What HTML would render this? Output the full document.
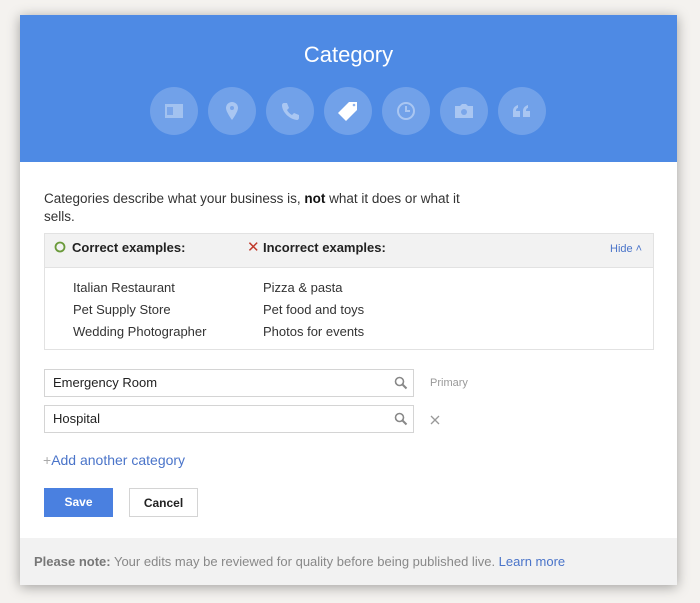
<!DOCTYPE html>
<html><head><meta charset="utf-8"><style>
body{margin:0;width:700px;height:603px;background:#f4f2ef;font-family:"Liberation Sans",sans-serif;position:relative;overflow:hidden}
.dlg{position:absolute;left:20px;top:15px;width:657px;height:570px;background:#fff;box-shadow:0 2px 12px rgba(0,0,0,.35)}
.hdr{position:absolute;left:0;top:0;width:657px;height:147px;background:#4e8ae4}
.title{position:absolute;top:27px;width:100%;text-align:center;color:#fff;font-size:22px}
.ic{position:absolute;top:72px;width:48px;height:48px;border-radius:50%;background:rgba(255,255,255,.2)}
.ic svg{position:absolute;left:12px;top:12px}
.t{position:absolute;font-size:13px;color:#333}
.box{position:absolute;left:24px;top:218px;width:608px;height:115px;border:1px solid #e2e2e2}
.bh{height:33px;background:#f2f2f2;border-bottom:1px solid #e2e2e2}
.inp{position:absolute;left:24px;width:370px;height:28px;border:1px solid #d4d4d4;font-size:13px;color:#222;line-height:26px;padding-left:8px;box-sizing:border-box}
.btn{position:absolute;top:473px;height:29px;font-size:12px;font-weight:bold;line-height:29px;text-align:center;box-sizing:border-box}
.foot{position:absolute;left:0;top:523px;width:657px;height:47px;background:#f2f2f2;font-size:13px;color:#888;line-height:47px;padding-left:14px;box-sizing:border-box}
</style></head><body>
<div class="dlg">
<div class="hdr">
<div class="title">Category</div>
<div class="ic" style="left:130px"><svg width="24" height="24"><rect x="3" y="5" width="18" height="14" fill="rgba(255,255,255,.35)"/><rect x="5" y="8" width="6" height="8" fill="#7aa6ea"/></svg></div>
<div class="ic" style="left:188px"><svg width="24" height="24"><path d="M12 3a6 6 0 0 0-6 6c0 4 6 12 6 12s6-8 6-12a6 6 0 0 0-6-6z" fill="rgba(255,255,255,.4)"/><circle cx="12" cy="9" r="2" fill="#7aa6ea"/></svg></div>
<div class="ic" style="left:246px"><svg width="24" height="24"><path d="M6 4l3 0 2 5-2 2c1 2 3 4 5 5l2-2 5 2v3c0 1-1 2-2 2C11 20 4 13 4 6c0-1 1-2 2-2z" fill="rgba(255,255,255,.4)"/></svg></div>
<div class="ic" style="left:304px"><svg width="24" height="24"><path d="M13 3h8v8L10 22 2 14z" fill="#fff"/><circle cx="18" cy="6" r="1.3" fill="#8db2ee"/></svg></div>
<div class="ic" style="left:362px"><svg width="24" height="24"><circle cx="12" cy="12" r="8" fill="none" stroke="rgba(255,255,255,.4)" stroke-width="2"/><path d="M12 7v5h4" fill="none" stroke="rgba(255,255,255,.4)" stroke-width="2"/></svg></div>
<div class="ic" style="left:420px"><svg width="24" height="24"><path d="M3 7h5l2-2h4l2 2h5v12H3z" fill="rgba(255,255,255,.4)"/><circle cx="12" cy="13" r="3" fill="#7aa6ea"/></svg></div>
<div class="ic" style="left:478px"><svg width="24" height="24"><path d="M3 18v-6c0-3 2-5 5-6v3c-1 0-2 1-2 3h4v6zM13 18v-6c0-3 2-5 5-6v3c-1 0-2 1-2 3h4v6z" fill="rgba(255,255,255,.4)"/></svg></div>
</div>
<div class="t" style="left:24px;top:175px;line-height:18px;width:430px;font-size:13.5px">Categories describe what your business is, <b style="color:#111">not</b> what it does or what it sells.</div>
<div class="box"><div class="bh"></div></div>
<svg style="position:absolute;left:34px;top:226px" width="12" height="12"><circle cx="6" cy="6" r="4.5" fill="none" stroke="#6a9a3a" stroke-width="1.8"/></svg>
<div class="t" style="left:52px;top:225px;font-weight:bold;color:#222">Correct examples:</div>
<div class="t" style="left:227px;top:223px;color:#c0392b;font-size:15px">✕</div>
<div class="t" style="left:243px;top:225px;font-weight:bold;color:#222">Incorrect examples:</div>
<div class="t" style="left:590px;top:228px;font-size:11px;color:#4a74c9">Hide ˄</div>
<div class="t" style="left:53px;top:262px;line-height:22px">Italian Restaurant<br>Pet Supply Store<br>Wedding Photographer</div>
<div class="t" style="left:243px;top:262px;line-height:22px">Pizza &amp; pasta<br>Pet food and toys<br>Photos for events</div>
<div class="inp" style="top:354px">Emergency Room</div>
<div class="inp" style="top:390px">Hospital</div>
<svg style="position:absolute;left:374px;top:361px" width="14" height="14"><circle cx="5.5" cy="5.5" r="4" fill="none" stroke="#888" stroke-width="1.6"/><path d="M8.5 8.5l4 4" stroke="#888" stroke-width="2"/></svg>
<svg style="position:absolute;left:374px;top:397px" width="14" height="14"><circle cx="5.5" cy="5.5" r="4" fill="none" stroke="#888" stroke-width="1.6"/><path d="M8.5 8.5l4 4" stroke="#888" stroke-width="2"/></svg>
<div class="t" style="left:410px;top:362px;font-size:11px;color:#999">Primary</div>
<svg style="position:absolute;left:410px;top:400px" width="10" height="10"><path d="M1 1l8 8M9 1l-8 8" stroke="#999" stroke-width="1.3"/></svg>
<div class="t" style="left:23px;top:437px;color:#4a74c9;font-size:14px"><span style="color:#aaa">+</span>Add another category</div>
<div class="btn" style="left:24px;width:69px;background:#4a80e0;color:#fff">Save</div>
<div class="btn" style="left:109px;width:69px;border:1px solid #d4d4d4;color:#222">Cancel</div>
<div class="foot"><b style="color:#777">Please note:</b> Your edits may be reviewed for quality before being published live. <span style="color:#4a74c9">Learn more</span></div>
</div>
</body></html>
